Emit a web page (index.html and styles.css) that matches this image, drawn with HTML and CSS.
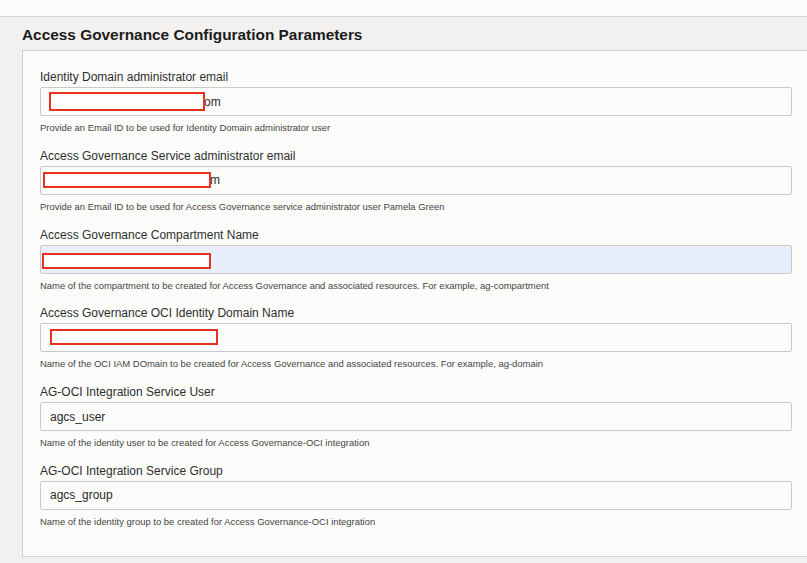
FILE: index.html
```html
<!DOCTYPE html>
<html lang="en">
<head>
<meta charset="utf-8">
<title>Access Governance Configuration Parameters</title>
<link rel="stylesheet" href="styles.css">
</head>
<body>
<div class="topbar"></div>
<section class="panel">
  <h2 class="panel-title">Access Governance Configuration Parameters</h2>
  <div class="card">
    <div class="field">
      <label class="label">Identity Domain administrator email</label>
      <div class="input">
        <span class="redact r1"></span>
        <span class="value v1">om</span>
      </div>
      <p class="help">Provide an Email ID to be used for Identity Domain administrator user</p>
    </div>
    <div class="field">
      <label class="label">Access Governance Service administrator email</label>
      <div class="input">
        <span class="redact r2"></span>
        <span class="value v2">m</span>
      </div>
      <p class="help">Provide an Email ID to be used for Access Governance service administrator user Pamela Green</p>
    </div>
    <div class="field">
      <label class="label">Access Governance Compartment Name</label>
      <div class="input autofill">
        <span class="redact r3"></span>
      </div>
      <p class="help">Name of the compartment to be created for Access Governance and associated resources. For example, ag-compartment</p>
    </div>
    <div class="field">
      <label class="label">Access Governance OCI Identity Domain Name</label>
      <div class="input">
        <span class="redact r4"></span>
      </div>
      <p class="help">Name of the OCI IAM DOmain to be created for Access Governance and associated resources. For example, ag-domain</p>
    </div>
    <div class="field">
      <label class="label">AG-OCI Integration Service User</label>
      <div class="input"><span class="value">agcs_user</span></div>
      <p class="help">Name of the identity user to be created for Access Governance-OCI integration</p>
    </div>
    <div class="field">
      <label class="label">AG-OCI Integration Service Group</label>
      <div class="input"><span class="value">agcs_group</span></div>
      <p class="help">Name of the identity group to be created for Access Governance-OCI integration</p>
    </div>
  </div>
</section>
</body>
</html>
```

FILE: styles.css
```css
* { box-sizing: border-box; }
html, body {
  margin: 0;
  padding: 0;
  height: 100%;
  overflow: hidden;
}
body {
  background: #f2f1ef;
  font-family: "Liberation Sans", Arial, Helvetica, sans-serif;
  color: #222;
}
.topbar {
  height: 17px;
  background: #fcfcfb;
  border-bottom: 1px solid #d6d6d4;
}
.panel {
  background: #f2f1ef;
  padding: 0 0 0 22px;
}
.panel-title {
  margin: 0;
  height: 33px;
  padding-top: 8px;
  font-size: 15.4px;
  line-height: 20px;
  font-weight: bold;
  color: #1c1c1c;
}
.card {
  background: #fcfcfb;
  border: 1px solid #cfcfcd;
  margin-right: -6px;
  padding: 19px 20px 30px 17px;
  height: 507px;
}
.field {
  margin-bottom: 14.8px;
}
.label {
  display: block;
  font-size: 12px;
  line-height: 15px;
  color: #2e2e2e;
  margin-bottom: 2px;
}
.input {
  position: relative;
  height: 29px;
  border: 1px solid #c9c9c7;
  border-radius: 2px;
  background: #fcfcfb;
  display: flex;
  align-items: center;
  padding-left: 9px;
}
.input.autofill {
  background: #e8eefb;
}
.value {
  font-size: 12px;
  color: #2a2a2a;
}
.v1 { padding-left: 154px; }
.v2 { padding-left: 160px; }
.redact {
  position: absolute;
  background: #ffffff;
  border: 2px solid #e5331f;
}
.r1 { left: 8px; top: 4px; width: 156px; height: 19px; }
.r2 { left: 2px; top: 5px; width: 168px; height: 16px; }
.r3 { left: 1px; top: 7px; width: 169px; height: 16px; }
.r4 { left: 9px; top: 5px; width: 168px; height: 16px; }
.help {
  margin: 6px 0 0 0;
  font-size: 9.45px;
  line-height: 12px;
  color: #444;
}
```
